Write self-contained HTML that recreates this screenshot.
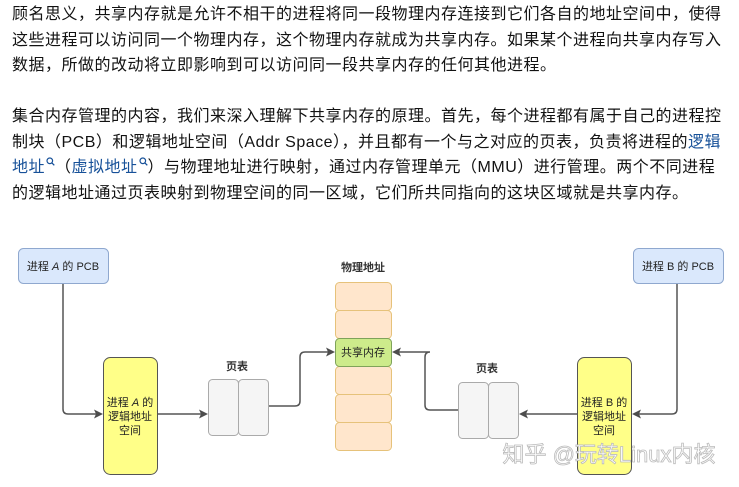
<!DOCTYPE html>
<html><head><meta charset="utf-8"><style>
body{margin:0;width:739px;height:487px;background:#fff;overflow:hidden;font-family:"Liberation Sans","Noto Sans CJK SC",sans-serif;}
.t{position:absolute;left:12px;width:730px;font-size:16px;line-height:25.7px;color:#121212;white-space:nowrap;letter-spacing:0.5px;}
a{color:#175199;text-decoration:none}
.q{display:inline-block;width:9px;height:9px;vertical-align:6px;margin-left:1px}
svg.d{position:absolute;left:0;top:0}
</style></head><body>
<div class="t" style="top:2px">顾名思义，共享内存就是允许不相干的进程将同一段物理内存连接到它们各自的地址空间中，使得<br>这些进程可以访问同一个物理内存，这个物理内存就成为共享内存。如果某个进程向共享内存写入<br>数据，所做的改动将立即影响到可以访问同一段共享内存的任何其他进程。</div>
<div class="t" style="top:104px">集合内存管理的内容，我们来深入理解下共享内存的原理。首先，每个进程都有属于自己的进程控<br>制块（PCB）和逻辑地址空间（Addr Space），并且都有一个与之对应的页表，负责将进程的<a>逻辑</a><br><a>地址<svg class="q" viewBox="0 0 9 9"><circle cx="3.8" cy="3.8" r="2.8" fill="none" stroke="#175199" stroke-width="1.2"/><path d="M5.8 5.8L8.3 8.3" stroke="#175199" stroke-width="1.3"/></svg></a>（<a>虚拟地址<svg class="q" viewBox="0 0 9 9"><circle cx="3.8" cy="3.8" r="2.8" fill="none" stroke="#175199" stroke-width="1.2"/><path d="M5.8 5.8L8.3 8.3" stroke="#175199" stroke-width="1.3"/></svg></a>）与物理地址进行映射，通过内存管理单元（MMU）进行管理。两个不同进程<br>的逻辑地址通过页表映射到物理空间的同一区域，它们所共同指向的这块区域就是共享内存。</div>
<svg class="d" width="739" height="487" font-family="Liberation Sans,Noto Sans CJK SC,sans-serif" font-size="11">
<g fill="none" stroke="#555" stroke-width="1.5">
<path d="M63 283 V409 Q63 414 68 414 H96"/>
<path d="M157 414 H202"/>
<path d="M268 406 H295 Q300 406 300 401 V357 Q300 352 305 352 H329"/>
<path d="M677 283 V409 Q677 414 672 414 H638"/>
<path d="M577 414 H525"/>
<path d="M458 410 H430 Q425 410 425 405 V357 Q425 352 430 352 H397"/>
</g>
<g fill="#4d4d4d">
<path d="M103 414 l-9 -4.5 2 4.5 -2 4.5z"/>
<path d="M208 414 l-9 -4.5 2 4.5 -2 4.5z"/>
<path d="M335 352 l-9 -4.5 2 4.5 -2 4.5z"/>
<path d="M632 414 l9 -4.5 -2 4.5 2 4.5z"/>
<path d="M519 414 l9 -4.5 -2 4.5 2 4.5z"/>
<path d="M392 352 l9 -4.5 -2 4.5 2 4.5z"/>
</g>
<rect x="18.5" y="248.5" width="90" height="35" rx="5" fill="#dae8fc" stroke="#8fa8cf"/>
<text x="63" y="270" text-anchor="middle" fill="#222">进程 <tspan font-style="italic">A</tspan> 的 PCB</text>
<rect x="633.5" y="248.5" width="90" height="35" rx="5" fill="#dae8fc" stroke="#8fa8cf"/>
<text x="678" y="270" text-anchor="middle" fill="#222">进程 B 的 PCB</text>
<rect x="103.5" y="357.5" width="54" height="117" rx="7" fill="#ffff88" stroke="#555"/>
<text x="130" y="406" text-anchor="middle" fill="#222">进程 <tspan font-style="italic">A</tspan> 的</text>
<text x="130" y="420" text-anchor="middle" fill="#222">逻辑地址</text>
<text x="130" y="434" text-anchor="middle" fill="#222">空间</text>
<rect x="577.5" y="357.5" width="54" height="117" rx="7" fill="#ffff88" stroke="#555"/>
<text x="604" y="406" text-anchor="middle" fill="#222">进程 B 的</text>
<text x="604" y="420" text-anchor="middle" fill="#222">逻辑地址</text>
<text x="604" y="434" text-anchor="middle" fill="#222">空间</text>
<g fill="#f5f5f5" stroke="#aaa">
<rect x="208.5" y="379.5" width="30" height="56" rx="4"/><rect x="238.5" y="379.5" width="30" height="56" rx="4"/>
<rect x="458.5" y="382.5" width="30" height="56" rx="4"/><rect x="488.5" y="382.5" width="30" height="56" rx="4"/>
</g>
<text x="237" y="370" text-anchor="middle" font-weight="bold" fill="#333">页表</text>
<text x="487" y="372" text-anchor="middle" font-weight="bold" fill="#333">页表</text>
<text x="363" y="271" text-anchor="middle" font-weight="bold" fill="#333">物理地址</text>
<g fill="#ffe6cc" stroke="#e6c27a">
<rect x="335.5" y="282.5" width="56" height="28" rx="4"/><rect x="335.5" y="310.5" width="56" height="28" rx="4"/>
<rect x="335.5" y="366.5" width="56" height="28" rx="4"/><rect x="335.5" y="394.5" width="56" height="28" rx="4"/><rect x="335.5" y="422.5" width="56" height="28" rx="4"/>
</g>
<rect x="335.5" y="338.5" width="56" height="28" rx="4" fill="#cdeb8b" stroke="#7fa35a"/>
<text x="363" y="356" text-anchor="middle" fill="#222">共享内存</text>
<text x="609" y="462" text-anchor="middle" font-size="22" fill="#fff" stroke="#bbb" stroke-width="0.8">知乎 @玩转Linux内核</text>
</svg>
</body></html>
